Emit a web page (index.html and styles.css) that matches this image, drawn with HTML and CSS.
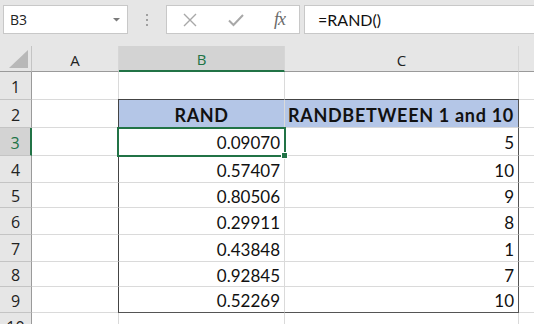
FILE: index.html
```
<!DOCTYPE html>
<html lang="en">
  <head>
    <meta charset="UTF-8" />
    <title>RAND sheet</title>
    <link rel="stylesheet" href="styles.css">
  </head>
  <body>
    <!-- Formula bar -->
    <div class="formula-bar">
      <div class="name-box">
        <span>B3</span>
        <svg class="caret" width="7" height="4" viewBox="0 0 7 4"><polygon points="0,0 7,0 3.5,3.5" fill="#7a7a7a"/></svg>
      </div>
      <div class="grip"><i></i><i></i><i></i></div>
      <div class="fx-buttons">
        <svg width="14" height="14" viewBox="0 0 14 14"><path d="M1 1 L13 13 M13 1 L1 13" stroke="#a8a8a8" stroke-width="1.4" fill="none"/></svg>
        <svg width="16" height="14" viewBox="0 0 16 14"><path d="M1 7.5 L5.5 12 L15 2" stroke="#a8a8a8" stroke-width="2" fill="none"/></svg>
        <span class="fx">fx</span>
      </div>
      <div class="formula-input">=RAND()</div>
    </div>

    <!-- Sheet -->
    <div class="sheet">
      <div class="hd corner">
        <svg width="20" height="19" viewBox="0 0 20 19"><polygon points="19,0 19,18 0,18" fill="#b8b8b8"/></svg>
      </div>
      <div class="hd col">A</div>
      <div class="hd col sel-col">B</div>
      <div class="hd col">C</div>
      <div class="hd col last"></div>

      <div class="hd row r1">1</div>
      <div class="cell"></div>
      <div class="cell"></div>
      <div class="cell"></div>
      <div class="cell last"></div>

      <div class="hd row">2</div>
      <div class="cell"></div>
      <div class="cell th tl">RAND</div>
      <div class="cell th tr">RANDBETWEEN 1 and 10</div>
      <div class="cell last"></div>

      <div class="hd row sel-row">3</div>
      <div class="cell"></div>
      <div class="cell num tl active">0.09070</div>
      <div class="cell num tr">5</div>
      <div class="cell last"></div>

      <div class="hd row">4</div>
      <div class="cell"></div>
      <div class="cell num tl">0.57407</div>
      <div class="cell num tr">10</div>
      <div class="cell last"></div>

      <div class="hd row">5</div>
      <div class="cell"></div>
      <div class="cell num tl">0.80506</div>
      <div class="cell num tr">9</div>
      <div class="cell last"></div>

      <div class="hd row">6</div>
      <div class="cell"></div>
      <div class="cell num tl">0.29911</div>
      <div class="cell num tr">8</div>
      <div class="cell last"></div>

      <div class="hd row">7</div>
      <div class="cell"></div>
      <div class="cell num tl">0.43848</div>
      <div class="cell num tr">1</div>
      <div class="cell last"></div>

      <div class="hd row">8</div>
      <div class="cell"></div>
      <div class="cell num tl">0.92845</div>
      <div class="cell num tr">7</div>
      <div class="cell last"></div>

      <div class="hd row">9</div>
      <div class="cell"></div>
      <div class="cell num tl tb">0.52269</div>
      <div class="cell num tr tb">10</div>
      <div class="cell last"></div>

      <div class="hd row">10</div>
      <div class="cell"></div>
      <div class="cell"></div>
      <div class="cell"></div>
      <div class="cell last"></div>
    </div>
  </body>
</html>
```

FILE: styles.css
```
* {
  box-sizing: border-box;
}
html,
body {
  margin: 0;
  height: 100%;
  overflow: hidden;
}
body {
  background: #e6e6e6;
  font-family: "Open Sans", sans-serif;
  color: #222;
}

/* formula bar */
.formula-bar {
  display: flex;
  align-items: center;
  height: 46px;
  padding: 0 0 7px 3px;
}
.name-box {
  width: 125px;
  height: 29px;
  background: #fff;
  border: 1px solid #c8c8c8;
  display: flex;
  align-items: center;
  justify-content: space-between;
  padding: 0 7px 0 6px;
  font-size: 14px;
}
.grip {
  width: 38px;
  display: flex;
  flex-direction: column;
  align-items: center;
  gap: 3px;
}
.grip i {
  width: 2px;
  height: 2px;
  background: #a0a0a0;
}
.fx-buttons {
  width: 134px;
  height: 29px;
  background: #fff;
  border: 1px solid #c8c8c8;
  display: flex;
  align-items: center;
  justify-content: space-between;
  padding: 0 14px 0 16px;
}
.fx {
  font-family: "Liberation Serif", serif;
  font-style: italic;
  font-size: 18px;
  color: #6a6a6a;
  letter-spacing: -1px;
}
.formula-input {
  flex: 1;
  height: 29px;
  margin-left: 4px;
  background: #fff;
  border: 1px solid #c8c8c8;
  border-right: none;
  display: flex;
  align-items: center;
  padding-left: 13px;
  font-family: "Lato", sans-serif;
  font-size: 16px;
  color: #111;
}

/* grid */
.sheet {
  display: grid;
  grid-template-columns: 32px 87px 166px 234px 1fr;
  grid-template-rows: 26px 28px 28px 28px 27px 25px 27px 27px 25px 26px 26px;
  background: #fff;
}
.hd {
  background: #e6e6e6;
  border-right: 1px solid #c4c4c4;
  border-bottom: 1px solid #c4c4c4;
  display: flex;
  align-items: center;
  justify-content: center;
  font-size: 15px;
  color: #222;
}
.corner {
  justify-content: flex-end;
  align-items: flex-end;
  padding: 0 2px 2px 0;
  border-bottom-color: #9a9a9a;
}
.col {
  border-bottom-color: #9a9a9a;
  border-right-color: #d6d6d6;
  padding-top: 2px;
}
.col.last {
  border-right: none;
}
.row {
  border-right-color: #9a9a9a;
  justify-content: center;
  font-size: 16px;
  padding-top: 2px;
}
.sel-col {
  background: #d3d3d3;
  color: #217346;
  border-bottom: 2px solid #217346;
}
.sel-row {
  background: #d3d3d3;
  color: #217346;
  border-right: 2px solid #217346;
}
.cell {
  border-right: 1px solid #dadada;
  border-bottom: 1px solid #dadada;
  font-family: "Lato", sans-serif;
  font-size: 17px;
  color: #111;
  display: flex;
  align-items: center;
  padding: 2px 4px 0;
  position: relative;
  white-space: nowrap;
}
.cell.last {
  border-right: none;
}

/* table */
.th {
  background: #b4c6e7;
  font-weight: bold;
  font-size: 18px;
  letter-spacing: 0.6px;
  justify-content: center;
  border-top: 1px solid #444;
  margin-top: -1px;
}
.tr.th {
  justify-content: flex-end;
  letter-spacing: 0.7px;
  padding-right: 4px;
}
.num {
  justify-content: flex-end;
}
.tl {
  border-left: 1px solid #444;
  margin-left: -1px;
}
.tr {
  border-right: 1px solid #555;
}
.tb {
  border-bottom: 1px solid #555;
}
.active {
  outline: 2px solid #217346;
  outline-offset: -1px;
  z-index: 2;
}
.active::after {
  content: "";
  position: absolute;
  right: -4px;
  bottom: -4px;
  width: 5px;
  height: 5px;
  background: #217346;
  border: 1px solid #fff;
}
```
